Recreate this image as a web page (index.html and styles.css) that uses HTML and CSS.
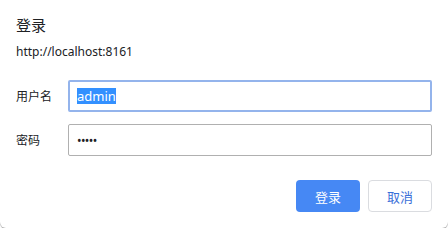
FILE: index.html
```html
<!DOCTYPE html>
<html lang="zh-CN">
<head>
<meta charset="utf-8">
<title>登录</title>
<link rel="stylesheet" href="styles.css">
</head>
<body>
<div class="dialog">
  <div class="title">登录</div>
  <div class="origin">http://localhost:8161</div>
  <div class="form">
    <div class="row">
      <div class="label">用户名</div>
      <div class="field focused"><span class="selected">admin</span></div>
    </div>
    <div class="row">
      <div class="label">密码</div>
      <div class="field"><span class="dots">•••••</span></div>
    </div>
  </div>
  <div class="actions">
    <div class="btn primary">登录</div>
    <div class="btn secondary">取消</div>
  </div>
</div>
</body>
</html>
```

FILE: styles.css
```css
html, body {
  margin: 0;
  padding: 0;
  background: #ffffff;
}
body {
  font-family: "Noto Sans", "Noto Sans CJK SC", sans-serif;
  color: #202124;
}
.dialog {
  box-sizing: border-box;
  width: 448px;
  height: 228px;
  padding: 14px 16px 0 16px;
  border-radius: 0 0 6px 6px;
  box-shadow: 0 1px 1px rgba(0, 0, 0, 0.35);
  background: #ffffff;
}
.title {
  font-family: "Noto Sans CJK SC", sans-serif;
  font-size: 15px;
  line-height: 22px;
  height: 22px;
}
.origin {
  margin-top: 8px;
  font-size: 12px;
  line-height: 16px;
  color: #202124;
}
.form {
  margin-top: 20px;
  display: flex;
  flex-direction: column;
  gap: 12px;
}
.row {
  display: flex;
  align-items: center;
}
.label {
  width: 52px;
  font-family: "Noto Sans CJK SC", sans-serif;
  font-size: 12px;
  line-height: 16px;
}
.field {
  box-sizing: border-box;
  flex: 1;
  height: 32px;
  border: 1px solid #b0b0b0;
  border-radius: 2px;
  padding: 0 8px;
  display: flex;
  align-items: center;
  font-size: 13px;
}
.field.focused {
  border: 2px solid #94b4ec;
  padding: 0 7px;
}
.selected {
  background: #3390ff;
  color: #ffffff;
  line-height: 16px;
}
.dots {
  font-size: 12px;
  letter-spacing: -0.6px;
  color: #202124;
}
.actions {
  margin-top: 24px;
  display: flex;
  justify-content: flex-end;
  gap: 8px;
}
.btn {
  box-sizing: border-box;
  width: 64px;
  height: 32px;
  border-radius: 4px;
  display: flex;
  align-items: center;
  justify-content: center;
  font-family: "Noto Sans CJK SC", sans-serif;
  font-size: 13px;
}
.primary {
  background: #4688f4;
  color: #ffffff;
}
.secondary {
  border: 1px solid #dadce0;
  color: #3a6fd8;
  background: #ffffff;
}
```
